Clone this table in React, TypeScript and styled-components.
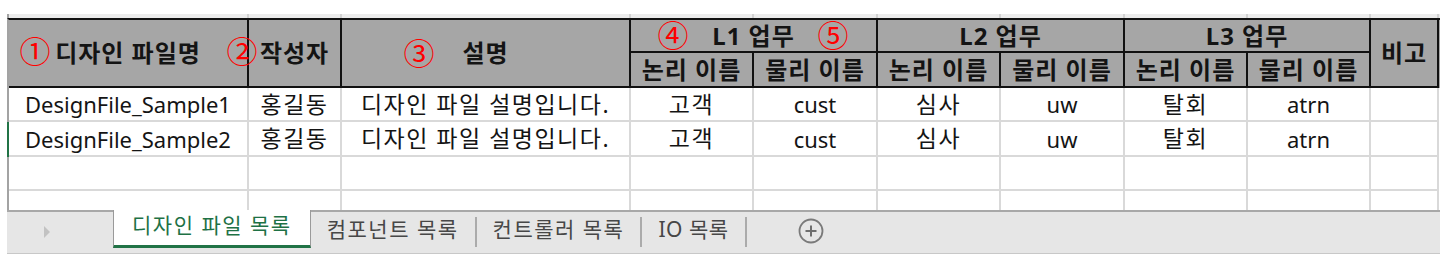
import React from 'react';
import styled, { createGlobalStyle } from 'styled-components';

const GlobalStyle = createGlobalStyle`
  *, *::before, *::after { box-sizing: border-box; }
  html, body { margin: 0; padding: 0; background: #ffffff; }
  body { font-family: "Noto Sans", "Noto Sans CJK KR", sans-serif; color: #111; }
`;

const COLS = [240, 93, 289, 123, 124, 123, 124, 123, 123, 68];
const template = COLS.map((c) => `${c}px`).join(' ');

const GRID = '#d9d9d9';
const EDGE = '#a3a3a3';

const isKorean = (s: string) => /[가-힣]/.test(s);

const Page = styled.div`
  padding: 14px 0 0 7px;
`;

const Workbook = styled.div`
  position: relative;
  width: 1433px;
  display: flex;
  flex-direction: column;
`;

const Sliver = styled.div`
  display: grid;
  grid-template-columns: ${template};
  height: 4px;
  background: #ececec;
  border-left: 2px solid ${EDGE};
`;

const SliverCell = styled.div`
  border-right: 2px solid #d2d2d2;
`;

const Header = styled.div`
  display: grid;
  grid-template-columns: ${template};
  grid-template-rows: 33px 35px;
  border-top: 2px solid #111;
  border-left: 2px solid ${EDGE};
  background: #a6a6a6;
`;

const HeadCell = styled.div<{ $col: string; $row: string }>`
  grid-column: ${(p) => p.$col};
  grid-row: ${(p) => p.$row};
  display: flex;
  align-items: center;
  justify-content: center;
  border-right: 2px solid #111;
  border-bottom: 2px solid #111;
  font-weight: 700;
  font-size: 24px;
  letter-spacing: 1px;
  line-height: 1;
  color: #141414;
  white-space: nowrap;
`;

const Row = styled.div<{ $h: number; $selected?: boolean }>`
  display: grid;
  grid-template-columns: ${template};
  height: ${(p) => p.$h}px;
  border-left: 2px solid ${(p) => (p.$selected ? '#217346' : EDGE)};
`;

const Cell = styled.div<{ $open?: boolean; $ko?: boolean }>`
  display: flex;
  align-items: center;
  justify-content: center;
  border-right: 2px solid ${GRID};
  border-bottom: ${(p) => (p.$open ? 'none' : `2px solid ${GRID}`)};
  font-size: ${(p) => (p.$ko ? 23 : 22)}px;
  letter-spacing: ${(p) => (p.$ko ? 1.5 : 0)}px;
  line-height: 1;
  color: #141414;
  white-space: nowrap;
`;

const Annotation = styled.span<{ $x: number; $y: number }>`
  position: absolute;
  left: ${(p) => p.$x - 20}px;
  top: ${(p) => p.$y - 20}px;
  width: 40px;
  height: 40px;
  display: flex;
  align-items: center;
  justify-content: center;
  font-family: "Noto Sans CJK KR", sans-serif;
  font-size: 31px;
  line-height: 1;
  color: #ff0000;
  pointer-events: none;
`;

const TabBar = styled.div`
  display: flex;
  align-items: stretch;
  height: 44px;
  background: #e6e6e6;
  box-shadow: inset 0 2px 0 #a8a8a8;
  border-bottom: 1px solid #c8c8c8;
`;

const Nav = styled.div`
  width: 106px;
  display: flex;
  align-items: center;
  justify-content: center;
  padding-right: 26px;
  color: #c2c2c2;
`;

const Tab = styled.div<{ $active?: boolean; $latin?: boolean }>`
  display: flex;
  align-items: center;
  justify-content: center;
  padding: 0 ${(p) => (p.$active ? 18 : 16)}px 4px;
  font-size: 21px;
  letter-spacing: ${(p) => (p.$latin ? 0.5 : 1.5)}px;
  line-height: 1;
  white-space: nowrap;
  color: ${(p) => (p.$active ? '#1e7145' : '#474747')};
  background: ${(p) => (p.$active ? '#ffffff' : 'transparent')};
  border-left: ${(p) => (p.$active ? '1px solid #9a9a9a' : 'none')};
  border-right: ${(p) => (p.$active ? '1px solid #9a9a9a' : 'none')};
  border-bottom: ${(p) => (p.$active ? '3px solid #217346' : 'none')};
  height: ${(p) => (p.$active ? '38px' : 'auto')};
`;

const Separator = styled.div`
  width: 2px;
  height: 30px;
  margin-top: 7px;
  background: #ababab;
`;

const AddButton = styled.div`
  margin-left: 51px;
  display: flex;
  align-items: center;
  padding-bottom: 2px;
`;

const columns = [
  'DesignFile_Sample',
  '홍길동',
  '디자인 파일 설명입니다.',
  '고객',
  'cust',
  '심사',
  'uw',
  '탈회',
  'atrn',
  '',
];

const dataRows = [
  { h: 34, values: columns.map((v, i) => (i === 0 ? `${v}1` : v)) },
  { h: 35, values: columns.map((v, i) => (i === 0 ? `${v}2` : v)), selected: true },
  { h: 34, values: columns.map(() => '') },
  { h: 19, values: columns.map(() => ''), open: true },
];

const subHeads = ['논리 이름', '물리 이름', '논리 이름', '물리 이름', '논리 이름', '물리 이름'];

const annotations = [
  { n: '①', x: 28, y: 35 },
  { n: '②', x: 235, y: 35 },
  { n: '③', x: 412, y: 37 },
  { n: '④', x: 666, y: 19 },
  { n: '⑤', x: 826, y: 19 },
];

const tabs = ['디자인 파일 목록', '컴포넌트 목록', '컨트롤러 목록', 'IO 목록'];

export default function App() {
  return (
    <>
      <GlobalStyle />
      <Page>
        <Workbook>
          <Sliver>
            {COLS.map((_, i) => (
              <SliverCell key={i} />
            ))}
          </Sliver>
          <Header>
            <HeadCell $col="1" $row="1 / span 2">디자인 파일명</HeadCell>
            <HeadCell $col="2" $row="1 / span 2">작성자</HeadCell>
            <HeadCell $col="3" $row="1 / span 2">설명</HeadCell>
            <HeadCell $col="4 / span 2" $row="1">L1 업무</HeadCell>
            <HeadCell $col="6 / span 2" $row="1">L2 업무</HeadCell>
            <HeadCell $col="8 / span 2" $row="1">L3 업무</HeadCell>
            <HeadCell $col="10" $row="1 / span 2">비고</HeadCell>
            {subHeads.map((s, i) => (
              <HeadCell key={i} $col={`${4 + i}`} $row="2">
                {s}
              </HeadCell>
            ))}
          </Header>
          {dataRows.map((r, ri) => (
            <Row key={ri} $h={r.h} $selected={r.selected}>
              {r.values.map((v, ci) => (
                <Cell key={ci} $open={r.open} $ko={isKorean(v)}>
                  {v}
                </Cell>
              ))}
            </Row>
          ))}
          <TabBar>
            <Nav>
              <svg width="8" height="12" viewBox="0 0 8 12">
                <path d="M1 0 L7 6 L1 12 Z" fill="currentColor" />
              </svg>
            </Nav>
            {tabs.map((t, i) => (
              <React.Fragment key={t}>
                <Tab $active={i === 0} $latin={/^[A-Z]/.test(t)}>
                  {t}
                </Tab>
                {i > 0 && <Separator />}
              </React.Fragment>
            ))}
            <AddButton>
              <svg width="26" height="26" viewBox="0 0 26 26">
                <circle cx="13" cy="13" r="11.5" fill="none" stroke="#7a7a7a" strokeWidth="1.8" />
                <path d="M13 7.5 V18.5 M7.5 13 H18.5" stroke="#6e6e6e" strokeWidth="2" />
              </svg>
            </AddButton>
          </TabBar>
          {annotations.map((a) => (
            <Annotation key={a.n} $x={a.x} $y={a.y}>
              {a.n}
            </Annotation>
          ))}
        </Workbook>
      </Page>
    </>
  );
}
